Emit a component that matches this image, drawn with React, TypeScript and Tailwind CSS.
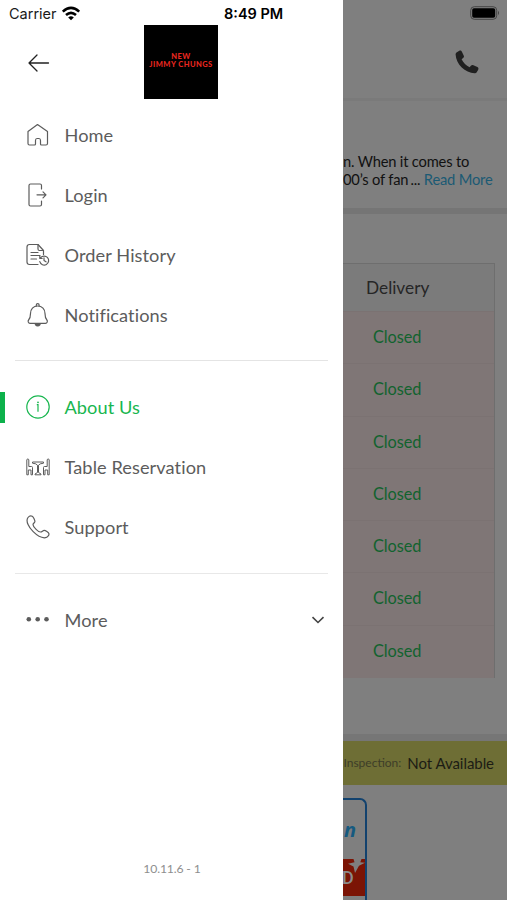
import React from 'react'

const HomeIcon = () => (
  <svg viewBox="0 0 24 24" className="h-6 w-6" fill="none" stroke="currentColor" strokeWidth="1.2" strokeLinejoin="round">
    <path d="M2 8.5 11.5 1.5 21.500 8.500V20.500q0 1.500-1.500 1.500H15.500q-1 0-1-1V17.500q0-2-1.500-2H11q-1.500 0-1.500 2V21q0 1-1 1H3.500Q2 22 2 20.500z" />
  </svg>
)

const LoginIcon = () => (
  <svg viewBox="0 0 24 24" className="h-6 w-6" fill="none" stroke="currentColor" strokeWidth="1.2" strokeLinecap="round" strokeLinejoin="round">
    <path d="M15.500 6V2.500Q15.500 1 14 1H4.500Q3 1 3 2.500V21.500Q3 23 4.500 23H14Q15.500 23 15.500 21.500V18" />
    <path d="M11 11.800H20M17 8.800l3 3-3 3" />
  </svg>
)

const HistoryIcon = () => (
  <svg viewBox="0 0 24 24" className="h-6 w-6" fill="none" stroke="currentColor" strokeWidth="1.2" strokeLinecap="round" strokeLinejoin="round">
    <path d="M12 21.500H3.500Q1 21.500 1 19V4q0-2.500 2.500-2.500H12L17.500 7.500V11.500" />
    <path d="M12 1.500V6q0 1.500 1.500 1.500h4M5 9.500h7M5 12.500h9M5 16h5.500" />
    <path d="M14.300 15.200a4.500 4.500 0 1 1-.5 3.500M13.800 13v2.500h2.400M18 14.800v2.700l2 1.300" />
  </svg>
)

const BellIcon = () => (
  <svg viewBox="0 0 24 24" className="h-6 w-6" fill="none" stroke="currentColor" strokeWidth="1.2" strokeLinecap="round" strokeLinejoin="round">
    <path d="M10.300 3V2a1.400 1.400 0 0 1 2.800 0v1" />
    <path d="M11.700 3C7.300 3 4.500 6.200 4.500 10.500c0 4-.5 5-1.900 6.500-1 1.200-.3 3.300 1.400 3.300h15.500c1.700 0 2.400-2.100 1.400-3.300-1.400-1.500-1.900-2.500-1.900-6.500C19 6.200 16.100 3 11.700 3z" />
    <path d="M9.300 21.500q2.400 2.800 4.800 0z" fill="currentColor" />
  </svg>
)

const InfoIcon = () => (
  <svg viewBox="0 0 24 24" className="h-6 w-6" fill="none" stroke="currentColor" strokeWidth="1.2">
    <circle cx="12" cy="12" r="11.200" />
    <path d="M10.800 9.700H12v7" />
    <circle cx="12" cy="7.300" r=".9" fill="currentColor" stroke="none" />
  </svg>
)

const TableIcon = () => (
  <svg viewBox="0 0 24 24" className="h-6 w-6" fill="none" stroke="currentColor" strokeWidth="1" strokeLinejoin="round">
    <path d="M.8 19.800V5q0-1 1-1t1 1v6.500H5.500q1 0 1 1V19.800H5V15H2.300v4.800z" />
    <path d="M23.200 19.800V5q0-1-1-1t-1 1v6.500H18.500q-1 0-1 1V19.800H19V15h2.700v4.800z" />
    <path d="M6.500 7h11v1.200q-4 .3-5 2v7.300l2.500 1.500v.8H9v-.8l2.500-1.500v-7.300q-1-1.700-5-2z" />
  </svg>
)

const SupportIcon = () => (
  <svg viewBox="0 0 24 24" className="h-6 w-6" fill="none" stroke="currentColor" strokeWidth="1.2" strokeLinejoin="round">
    <path d="M2 2.500C3 1.200 5 .5 6.200 1.200 7.500 2 9 5.200 8.900 6.500 8.800 7.800 7 8.300 7 9.700c.2 2.300 5.500 7.600 7.700 7.300 1.400-.2 2.200-1.600 3.500-1.600 1.200 0 4.400 2 4.700 3.300.4 1.600-1.500 3.700-3.500 4-3.600.5-8-1.800-12.200-6C3.200 12.600-.8 6.200 2 2.500z" />
  </svg>
)

const DotsIcon = () => (
  <svg viewBox="0 0 24 24" className="h-6 w-6" fill="currentColor">
    <circle cx="2.800" cy="11.300" r="2.300" />
    <circle cx="11.700" cy="11.300" r="2.300" />
    <circle cx="20.500" cy="11.300" r="2.300" />
  </svg>
)

const WifiIcon = () => (
  <svg viewBox="0 0 20 15" className="h-[15px] w-5" fill="none" stroke="#000" strokeWidth="2.600">
    <path d="M1.800 5.600Q10-1.800 18.200 5.600" />
    <path d="M5 9Q10 4.600 15 9" />
    <path d="M10 14.300 7.200 11.400Q10 9 12.800 11.400z" fill="#000" stroke="none" />
  </svg>
)

const mainItems = [
  { label: 'Home', icon: HomeIcon },
  { label: 'Login', icon: LoginIcon },
  { label: 'Order History', icon: HistoryIcon },
  { label: 'Notifications', icon: BellIcon },
]

const infoItems = [
  { label: 'About Us', icon: InfoIcon, active: true },
  { label: 'Table Reservation', icon: TableIcon },
  { label: 'Support', icon: SupportIcon },
]

const days = ['Mon', 'Tue', 'Wed', 'Thu', 'Fri', 'Sat', 'Sun']

type ItemProps = {
  label: string
  icon: React.ComponentType
  active?: boolean
  children?: React.ReactNode
}

function MenuItem({ label, icon: Icon, active, children }: ItemProps) {
  return (
    <div className={`flex h-[60px] items-center pr-[18px] ${active ? 'text-[#18b64f]' : 'text-[#5c5c5c]'}`}>
      <span className={`h-[31px] w-[5px] ${active ? 'bg-[#0db14b]' : ''}`} />
      <span className="ml-[21px]">
        <Icon />
      </span>
      <span className="ml-[14.500px] pb-px text-[18.200px] leading-6 tracking-[0.080px]">{label}</span>
      {children}
    </div>
  )
}

function Drawer() {
  return (
    <aside className="flex h-full w-[343px] shrink-0 flex-col bg-white">
      <div className="flex h-[25px] items-center pt-0.5 pl-[9px] font-['Inter',sans-serif] text-[#1a1a1a]">
        <span className="w-[52px] text-[14.500px]">Carrier</span>
        <WifiIcon />
        <span className="ml-[143px] text-[14.500px] font-semibold whitespace-nowrap text-black">8:49 PM</span>
      </div>
      <div className="flex h-[80px] items-start">
        <svg viewBox="0 0 22 20" className="mt-[28px] ml-[28px] h-5 w-[22px]" fill="none" stroke="#222" strokeWidth="1.3" strokeLinecap="round" strokeLinejoin="round">
          <path d="M20.500 10H1M9 2 1 10l8 8" />
        </svg>
        <div className="ml-[94px] flex h-[74px] w-[74px] flex-col items-center justify-center bg-black pb-0.5 font-['Lato',sans-serif] text-[7.500px] leading-[8px] font-black tracking-[0.450px] whitespace-nowrap text-[#e6261f]">
          <span>NEW</span>
          <span>JIMMY CHUNGS</span>
        </div>
      </div>

      {mainItems.map((item) => (
        <MenuItem key={item.label} {...item} />
      ))}
      <div className="mx-[15px] mt-[15px] mb-4 h-px bg-[#e4e4e4]" />
      {infoItems.map((item) => (
        <MenuItem key={item.label} {...item} />
      ))}
      <div className="mx-[15px] mt-4 mb-4 h-px bg-[#e8e8e8]" />
      <MenuItem label="More" icon={DotsIcon}>
        <svg viewBox="0 0 14 8" className="ml-auto h-2 w-[14px]" fill="none" stroke="#444" strokeWidth="1.6">
          <path d="M1.500 1.200 7 6.500l5.500-5.300" />
        </svg>
      </MenuItem>

      <div className="mt-auto mb-[22px] pl-px text-center text-[12.200px] leading-[18px] tracking-[-0.150px] text-[#8e8e8e]">10.11.6 - 1</div>
    </aside>
  )
}

function AboutPage() {
  return (
    <main className="flex h-full min-w-0 flex-1 flex-col overflow-hidden bg-[#7f7f7f]">
      <div className="flex h-[26px] items-center justify-end pr-[7px]">
        <svg viewBox="0 0 30 14" className="h-[14px] w-[30px]">
          <rect x=".7" y=".7" width="26" height="12.600" rx="3.600" fill="none" stroke="#454545" strokeWidth="1" />
          <rect x="2.200" y="2.200" width="23" height="9.600" rx="1.800" fill="#000" />
          <path d="M28 4.800q2 2.200 0 4.400z" fill="#454545" />
        </svg>
      </div>
      <div className="flex h-[72px] items-start justify-end pr-[28px]">
        <svg viewBox="0 0 24 24" className="mt-6 h-6 w-6" fill="#202020">
          <path d="M1.500 2.500 4.300.8C5.300.2 6.400.7 6.900 1.700l1.900 4c.4.900.1 1.700-.7 2.300L6.600 9.200c1.800 3.500 4.500 6.300 8 8l1.300-1.400c.7-.8 1.600-1 2.500-.6l4 1.900c1 .5 1.300 1.600.8 2.600l-1.500 2.500c-.5.800-1.200 1.100-2.100 1.100C10.300 23 1 14.300.6 4.500c0-.8.2-1.500.9-2z" />
        </svg>
      </div>
      <div className="h-[3px] bg-[#7a7a7a]" />

      <div className="h-[107px] pt-[51px] text-[14.700px] leading-[18px] tracking-[-0.180px] whitespace-nowrap text-[#111]">
        <p>n. When it comes to</p>
        <p>
          00’s of fan<span className="ml-0.5">...</span> <span className="text-[#1b5a74]">Read More</span>
        </p>
      </div>
      <div className="h-[6px] bg-[#757575]" />

      <div className="mt-[49px] mr-[12px] h-[415px] border-t border-r border-[#6e6e6e] bg-[#7f7676] text-center">
        <div className="flex h-[47px] items-center bg-[#7b7b7b] pl-[23px] text-[17.300px] text-[#262626]">Delivery</div>
        {days.map((day) => (
          <div key={day} className="flex h-[52.300px] items-center border-t border-[#7b7272] pb-px pl-[30px] text-[16.300px] tracking-[-0.080px] text-[#12632f]">
            Closed
          </div>
        ))}
      </div>

      <div className="mt-[56px] h-[7px] shrink-0 bg-[#767676]" />
      <div className="flex h-[44px] shrink-0 items-center justify-end bg-[#6e6e35] pr-[13px] whitespace-nowrap">
        <span className="text-[12px] text-[#3d3d28]">Inspection:</span>
        <span className="ml-[6px] text-[15px] tracking-[-0.050px] text-[#1c1c14]">Not Available</span>
      </div>

      <div className="mt-[13px] h-[102px] w-[24px] shrink-0 rounded-tr-[7px] border-t-2 border-r-2 border-[#12426e]">
        <div className="flex h-[59px] items-center pl-px font-['Open_Sans',sans-serif] text-[20px] leading-6 font-bold text-[#155a80] italic">n</div>
        <div className="relative flex h-[37px] items-center bg-[#7b1405] font-['Roboto',sans-serif] text-[18px] leading-6 font-medium text-[#8b8b8b]">
          <svg viewBox="0 0 22 16" className="absolute top-0 left-0 h-4 w-[22px]" fill="#7f7f7f">
            <path d="M10.500 0h8l-1.200 3.300 4.700.4-6 3L12 14 10.500 7.500 5 4.700l6.500-1.500z" />
          </svg>
          <span className="-ml-px">D</span>
        </div>
      </div>
    </main>
  )
}

export default function App() {
  return (
    <div className="flex h-[900px] w-[507px] overflow-hidden bg-white font-['Lato',sans-serif]">
      <Drawer />
      <AboutPage />
    </div>
  )
}
